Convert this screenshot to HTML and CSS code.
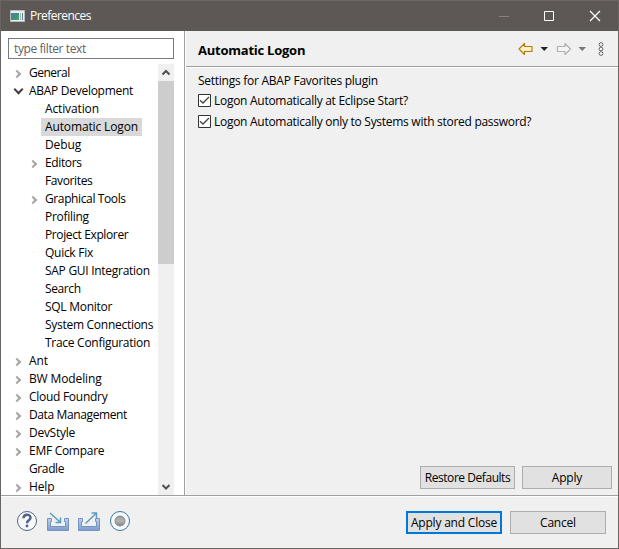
FILE: index.html
```html
<!DOCTYPE html>
<html lang="en">
<head>
<meta charset="utf-8">
<title>Preferences</title>
<link rel="stylesheet" href="styles.css">
</head>
<body>
<div class="window">
  <header class="titlebar">
    <svg class="app-icon" width="16" height="14" viewBox="0 0 16 14">
      <defs><linearGradient id="scene" x2="1" y2="1"><stop stop-color="#5479a8"/><stop offset=".5" stop-color="#3f8f80"/><stop offset="1" stop-color="#4ba565"/></linearGradient></defs>
      <path fill="#e9ecec" stroke="#b9bcbc" d="M1.500 1.500h14v11h-14z"/><path fill="url(#scene)" d="M2 4h8v7H2z"/><path fill="#a4aeae" d="M11 4h1v7h-1z"/><path fill="#5b8c9b" d="M13 4h1v7h-1z"/>
    </svg>
    <h1 class="title">Preferences</h1>
    <svg class="controls" width="110" height="16" viewBox="0 0 110 16">
      <path fill="none" stroke="#85817e" d="M0 8.500h10"/>
      <path fill="none" stroke="#fff" d="M45.500 3.500h9v9h-9z"/>
      <path fill="none" stroke="#fff" stroke-width="1.200" d="M91 3l10 10M101 3L91 13"/>
    </svg>
  </header>
  <main class="main">
    <nav class="sidebar">
      <input class="filter" type="text" placeholder="type filter text">
      <div class="tree">
        <ul class="list">
          <li class="node closed tightest"><span>General</span></li>
          <li class="node open"><span>ABAP Development</span></li>
          <li class="node child loose"><span>Activation</span></li>
          <li class="node child selected loose"><span>Automatic Logon</span></li>
          <li class="node child loose"><span>Debug</span></li>
          <li class="node child closed tight"><span>Editors</span></li>
          <li class="node child tight"><span>Favorites</span></li>
          <li class="node child closed tight"><span>Graphical Tools</span></li>
          <li class="node child"><span>Profiling</span></li>
          <li class="node child tight"><span>Project Explorer</span></li>
          <li class="node child"><span>Quick Fix</span></li>
          <li class="node child"><span>SAP GUI Integration</span></li>
          <li class="node child tight"><span>Search</span></li>
          <li class="node child"><span>SQL Monitor</span></li>
          <li class="node child"><span>System Connections</span></li>
          <li class="node child"><span>Trace Configuration</span></li>
          <li class="node closed loose"><span>Ant</span></li>
          <li class="node closed loose"><span>BW Modeling</span></li>
          <li class="node closed"><span>Cloud Foundry</span></li>
          <li class="node closed tight"><span>Data Management</span></li>
          <li class="node closed"><span>DevStyle</span></li>
          <li class="node closed"><span>EMF Compare</span></li>
          <li class="node tight"><span>Gradle</span></li>
          <li class="node closed loose"><span>Help</span></li>
        </ul>
        <div class="scrollbar">
          <svg class="scroll-arrow" viewBox="0 0 16 17"><path d="M4.500 10.500L8 7l3.500 3.500"/></svg>
          <div class="thumb"></div>
          <svg class="scroll-arrow" viewBox="0 0 16 17"><path d="M4.500 7L8 10.500 11.500 7"/></svg>
        </div>
      </div>
    </nav>
    <section class="page">
      <div class="page-head">
        <h2 class="heading">Automatic Logon</h2>
        <svg class="history" width="90" height="18" viewBox="0 0 90 18">
          <defs><linearGradient id="gold" x2="0" y2="1"><stop stop-color="#fffdf0"/><stop offset="1" stop-color="#ffe59a"/></linearGradient></defs>
          <path fill="url(#gold)" stroke="#b97a10" stroke-width="1.200" d="M1 9l5.500-5.500v3h7.500v5H6.500v3z" stroke-linejoin="round"/>
          <path fill="#222" d="M22.500 7h7.500l-3.750 4z"/>
          <path fill="#f5f5f5" stroke="#b0b0b0" stroke-width="1.200" d="M52.500 9L47 3.500v3h-7.500v5H47v3z" stroke-linejoin="round"/>
          <path fill="#77777b" d="M60.500 7h7.500l-3.750 4z"/>
          <g fill="#f8f8f8" stroke="#666"><circle cx="83" cy="4.500" r="1.900"/><circle cx="83" cy="9" r="1.900"/><circle cx="83" cy="13.500" r="1.900"/></g>
        </svg>
      </div>
      <div class="settings">
        <p class="intro">Settings for ABAP Favorites plugin</p>
        <div class="option">
          <svg class="box" width="13" height="13" viewBox="0 0 13 13"><path fill="#fff" stroke="#333" d="M.5.5h12v12H.5z"/><path fill="none" stroke="#444" stroke-width="1.300" d="M2 6.200L5 9l6-6"/></svg>
          <span>Logon Automatically at Eclipse Start?</span>
        </div>
        <div class="option">
          <svg class="box" width="13" height="13" viewBox="0 0 13 13"><path fill="#fff" stroke="#333" d="M.5.5h12v12H.5z"/><path fill="none" stroke="#444" stroke-width="1.300" d="M2 6.200L5 9l6-6"/></svg>
          <span>Logon Automatically only to Systems with stored password?</span>
        </div>
      </div>
      <div class="page-actions">
        <button class="button restore">Restore Defaults</button>
        <button class="button apply">Apply</button>
      </div>
    </section>
  </main>
  <footer class="footer">
    <svg class="tools" width="118" height="24" viewBox="0 0 118 24">
      <defs><linearGradient id="tray" x2="0" y2="1"><stop stop-color="#bdd3ea"/><stop offset="1" stop-color="#7b9bcc"/></linearGradient>
      <linearGradient id="dot" x2="0" y2="1"><stop stop-color="#999"/><stop offset=".5" stop-color="#b4b4b4"/><stop offset="1" stop-color="#888"/></linearGradient></defs>
      <circle cx="11" cy="12" r="9.500" fill="#f8f9fb" stroke="#526482"/>
      <path d="M7.500 9.300C7.500 4.500 14.500 4.500 14.500 8.800 14.500 11.400 11 11.300 11 14.200" fill="none" stroke="#4f6488" stroke-width="2.500"/><circle cx="11" cy="17" r="1.400" fill="#4f6488"/>
      <path fill="url(#tray)" stroke="#7594c4" d="M31.500 9.500h4v3h-1v5h15v-5h-1v-3h4v12h-21z"/>
      <path d="M34 4l10 9M44.500 8.500v5h-5" fill="none" stroke="#5c9cbe" stroke-width="1.500"/>
      <path fill="url(#tray)" stroke="#7594c4" d="M62.500 9.500h4v3h-1v5h15v-5h-1v-3h4v12h-21z"/>
      <path d="M69.500 14.500l10.500-10M75.500 4h5v5" fill="none" stroke="#5c9cbe" stroke-width="1.500"/>
      <circle cx="104" cy="12" r="9.500" fill="#f7fafc" stroke="#3476aa"/><circle cx="104" cy="12" r="5" fill="url(#dot)" stroke="#777" stroke-width=".8"/>
    </svg>
    <button class="button primary">Apply and Close</button>
    <button class="button cancel">Cancel</button>
  </footer>
</div>
</body>
</html>
```
FILE: styles.css
```css
*, *::before { box-sizing: border-box; }
body { margin: 0; font: 12px/18px "Open Sans", "Noto Sans", sans-serif; color: #000; }
h1, h2, p, ul { margin: 0; padding: 0; }
.window { width: 619px; height: 549px; display: flex; flex-direction: column; background: #f0f0f0; border: 1px solid #6a6562; border-top: 0; overflow: hidden; }
.titlebar { height: 31px; flex: none; display: flex; align-items: center; padding: 0 9px 0 8px; background: #5d5855; border-top: 1px solid #6c6764; color: #fff; }
.title { font-size: 12px; font-weight: 400; margin-left: 5px; letter-spacing: -.55px; }
.controls { margin-left: auto; }
.main { display: flex; height: 464px; flex: none; }
.sidebar { width: 183px; background: #fff; padding: 7px 0 0 7px; }
.filter { display: block; width: 166px; height: 21px; border: 1px solid #7a7a7a; padding: 0 5px; font: inherit; letter-spacing: -.4px; outline: 0; background: #fff; }
.filter::placeholder { color: #5f5f5f; opacity: 1; }
.tree { display: flex; margin-top: 5px; height: 431px; width: 166px; overflow: hidden; }
.list { list-style: none; width: 150px; }
.node { display: flex; height: 18px; padding-left: 21px; white-space: nowrap; letter-spacing: -.28px; }
.loose { letter-spacing: -.13px; }
.tight { letter-spacing: -.38px; }
.tightest { letter-spacing: -.5px; }
.child { padding-left: 37px; }
.closed::before, .open::before { content: ""; flex: none; transform: rotate(45deg); }
.closed::before { width: 6px; height: 6px; margin: 7px 9px 0 -15px; border: solid #a6a6a6; border-width: 2px 2px 0 0; }
.open::before { width: 7px; height: 7px; margin: 4px 7px 0 -14px; border: solid #404040; border-width: 0 2px 2px 0; }
.selected span { background: #d9d9d9; padding: 0 4px; margin: 0 -4px; }
.scrollbar { width: 16px; background: #f0f0f0; display: flex; flex-direction: column; }
.scroll-arrow { width: 16px; height: 17px; fill: none; stroke: #505050; stroke-width: 2; }
.scroll-arrow:last-child { margin-top: auto; }
.thumb { height: 183px; background: #cdcdcd; }
.page { flex: 1; display: flex; flex-direction: column; border-left: 1px solid #a0a0a0; box-shadow: inset 1px 0 #fff; min-width: 0; }
.page-head { height: 37px; margin-left: 1px; padding-left: 12px; display: flex; align-items: center; border-bottom: 1px solid #fff; box-shadow: inset 0 -1px #a0a0a0; }
.heading { font-size: 13px; line-height: 18px; font-weight: 700; letter-spacing: -.24px; padding-top: 2px; }
.history { margin-left: auto; margin-right: 10px; }
.settings { padding: 4px 0 0 13px; letter-spacing: -.28px; }
.intro { letter-spacing: -.26px; }
.option { display: flex; align-items: center; height: 21px; gap: 3px; white-space: nowrap; }
.page-actions { margin: auto 6px 6px auto; display: flex; gap: 7px; }
.button { height: 23px; border: 1px solid #adadad; background: #e1e1e1; font: inherit; padding: 0; color: #000; white-space: nowrap; letter-spacing: -.2px; }
.restore { width: 95px; letter-spacing: -.45px; }
.apply { width: 90px; }
.footer { flex: 1; border-top: 1px solid #a0a0a0; box-shadow: inset 0 1px #fff; display: flex; align-items: center; padding: 1px 12px 0 15px; gap: 8px; }
.tools { margin-right: auto; margin-top: -4px; }
.primary { width: 96px; border: 2px solid #0078d7; }
.cancel { width: 96px; }
```
